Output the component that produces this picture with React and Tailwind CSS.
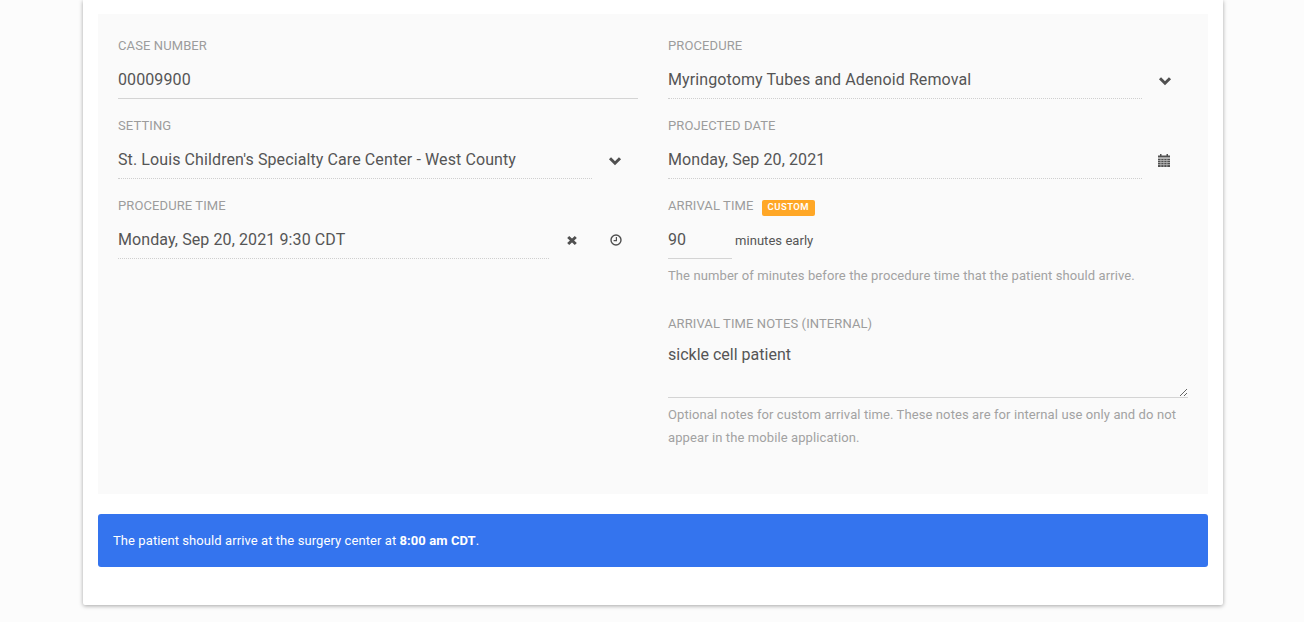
import React from "react";

const labelCls = "block h-[20px] text-[13px] leading-[20px] tracking-[0.1px] text-[#9c9c9c] uppercase";
const valueCls = "text-[16px] leading-[22px] tracking-[0.1px] text-[#555555]";

function Chevron() {
  return (
    <svg width="14" height="10" viewBox="0 0 14 10" className="mt-[7px]">
      <path d="M2 2.2 7 7.2 12 2.2" fill="none" stroke="currentColor" strokeWidth="3" />
    </svg>
  );
}

function Cross() {
  return (
    <svg width="12" height="11" viewBox="0 0 12 11" className="mt-[6px]">
      <path d="M2.2 2 9.8 9M9.8 2 2.2 9" fill="none" stroke="currentColor" strokeWidth="3" />
    </svg>
  );
}

function Clock() {
  return (
    <svg width="12" height="12" viewBox="0 0 12 12" className="mt-[5px]">
      <circle cx="6" cy="6" r="5" fill="none" stroke="currentColor" strokeWidth="1.4" />
      <path d="M6.4 3V6.6H3.6" fill="none" stroke="currentColor" strokeWidth="1.2" />
    </svg>
  );
}

function Calendar() {
  return (
    <svg width="12" height="13" viewBox="0 0 12 13" className="mt-[6px]">
      <path d="M0 1.5H2V0H3.5V1.5H8.5V0H10V1.5H12V3.6H0Z" fill="currentColor" />
      <path d="M0 4.6H12V13H0Z" fill="currentColor" />
      <path d="M0 6.5H12M0 8.5H12M0 10.6H12M2.9 4.6V13M5.9 4.6V13M8.9 4.6V13" stroke="#bdbdbd" strokeWidth="0.8" />
    </svg>
  );
}

function Field({ label, value, solid, children, width }) {
  return (
    <div className="h-[80px] pt-[1px]">
      <span className={labelCls}>{label}</span>
      <div className="flex h-[43px]">
        <div className={`flex h-[43px] items-center pt-[6px] ${width} ${solid ? "border-b border-[#d4d4d4]" : "border-b border-dotted border-[#cfcfcf]"}`}>
          <span className={valueCls}>{value}</span>
        </div>
        {children}
      </div>
    </div>
  );
}

function IconSlot({ children, className }) {
  return <div className={`flex h-[42px] items-center justify-center text-[#505050] ${className}`}>{children}</div>;
}

export default function App() {
  return (
    <div className="min-h-[622px] bg-[#fcfcfc] font-['Roboto',sans-serif]">
      <div className="ml-[83px] h-[605px] w-[1140px] rounded-b-[2px] bg-white px-[15px] pt-[14px] shadow-[0_1px_4px_rgba(0,0,0,0.35)]">
        <div className="grid h-[480px] grid-cols-2 gap-x-[30px] bg-[#fafafa] px-[20px] pt-[21px]">
          <div>
            <Field label="Case Number" value="00009900" solid width="w-full" />
            <Field label="Setting" value="St. Louis Children's Specialty Care Center - West County" width="w-[474px]">
              <IconSlot className="w-[46px]"><Chevron /></IconSlot>
            </Field>
            <Field label="Procedure Time" value="Monday, Sep 20, 2021 9:30 CDT" width="w-[431px]">
              <IconSlot className="w-[46px]"><Cross /></IconSlot>
              <IconSlot className="w-[41px]"><Clock /></IconSlot>
            </Field>
          </div>
          <div>
            <Field label="Procedure" value="Myringotomy Tubes and Adenoid Removal" width="w-[474px]">
              <IconSlot className="w-[46px]"><Chevron /></IconSlot>
            </Field>
            <Field label="Projected Date" value="Monday, Sep 20, 2021" width="w-[474px]">
              <IconSlot className="w-[44px]"><Calendar /></IconSlot>
            </Field>
            <div className="pt-[1px]">
              <div className="flex h-[20px] items-center">
                <span className={labelCls}>Arrival Time</span>
                <span className="ml-[8px] mt-[3px] flex h-[16px] items-center rounded-[2px] bg-[#ffa726] px-[6px] text-[9.5px] font-semibold tracking-[0.45px] text-white">CUSTOM</span>
              </div>
              <div className="flex h-[43px] items-center">
                <div className="flex h-[43px] w-[64px] items-center border-b border-[#d4d4d4] pt-[6px]">
                  <span className={valueCls}>90</span>
                </div>
                <span className="ml-[3px] pt-[7px] text-[13px] tracking-[0.05px] text-[#555555]">minutes early</span>
              </div>
              <p className="mt-[5px] h-[23px] text-[13px] leading-[23px] tracking-[0.1px] text-[#a2a2a2]">
                The number of minutes before the procedure time that the patient should arrive.
              </p>
              <span className={`${labelCls} mt-[27px]`}>Arrival Time Notes (Internal)</span>
              <textarea
                readOnly
                value="sickle cell patient"
                className="mt-[2px] block h-[62px] w-full resize-y border-b border-[#d4d4d4] bg-transparent pt-[8px] text-[16px] leading-[22px] text-[#555555] outline-none"
              />
              <p className="mt-[5px] text-[13px] leading-[23px] tracking-[0.1px] text-[#a2a2a2]">
                Optional notes for custom arrival time. These notes are for internal use only and do not appear in the mobile application.
              </p>
            </div>
          </div>
        </div>
        <div className="mt-[20px] flex h-[53px] items-center rounded-[3px] bg-[#3474ee] px-[15px] text-[13px] tracking-[0.08px] text-white">
          <span>The patient should arrive at the surgery center at <b className="font-bold">8:00 am CDT</b>.</span>
        </div>
      </div>
    </div>
  );
}
